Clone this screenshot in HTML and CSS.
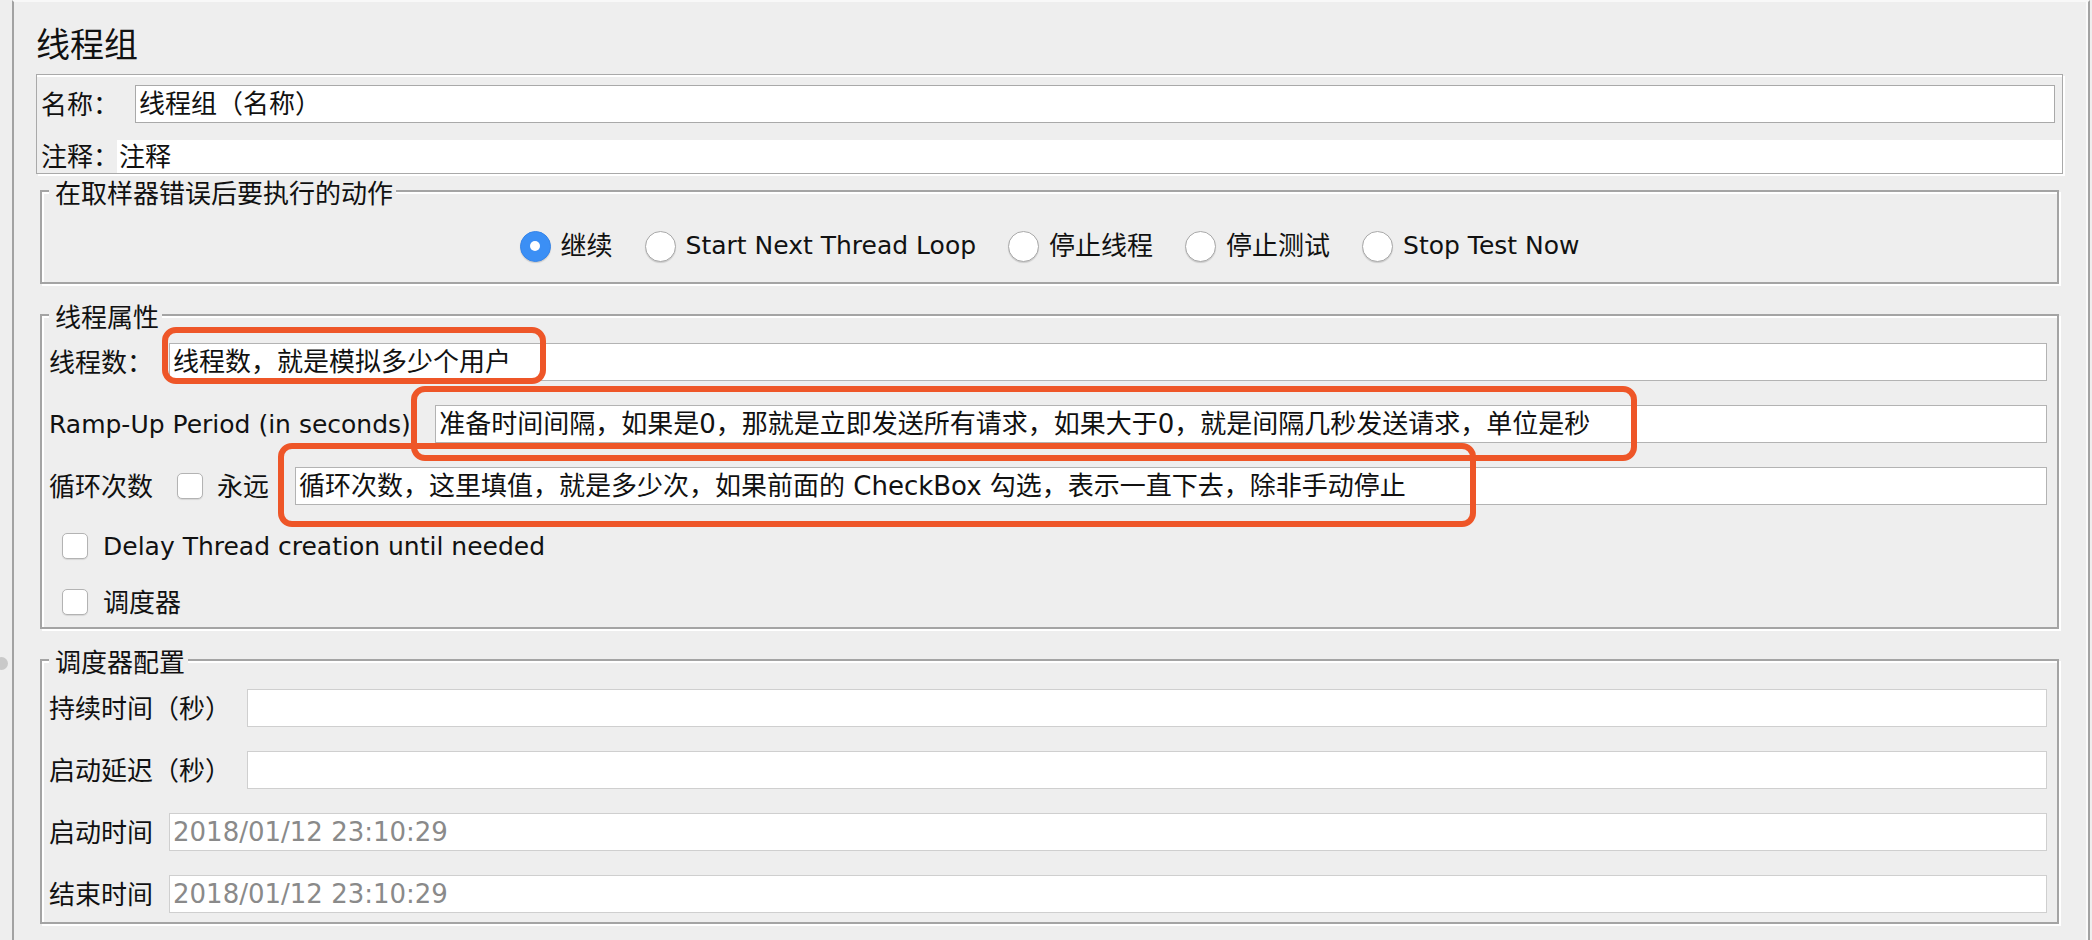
FILE: index.html
```html
<!DOCTYPE html>
<html lang="zh-CN">
<head>
<meta charset="utf-8">
<title>线程组</title>
<link rel="stylesheet" href="styles.css">
</head>
<body>
<div class="frame">
  <h1 class="title">线程组</h1>

  <div class="name-panel">
    <div class="name-row">
      <span class="label">名称：</span>
      <div class="field name-field">线程组（名称）</div>
    </div>
    <div class="comment-row">
      <span class="label comment-label">注释：</span>
      <div class="comment">注释</div>
    </div>
  </div>

  <div class="group group-radio">
    <div class="legend">在取样器错误后要执行的动作</div>
    <div class="radios">
      <div class="radio-item"><span class="radio checked"></span><span>继续</span></div>
      <div class="radio-item"><span class="radio"></span><span class="en">Start Next Thread Loop</span></div>
      <div class="radio-item"><span class="radio"></span><span>停止线程</span></div>
      <div class="radio-item"><span class="radio"></span><span>停止测试</span></div>
      <div class="radio-item"><span class="radio"></span><span class="en">Stop Test Now</span></div>
    </div>
  </div>

  <div class="group group-thread">
    <div class="legend">线程属性</div>
    <div class="row r1">
      <span class="label">线程数：</span>
      <div class="field">线程数，就是模拟多少个用户</div>
    </div>
    <div class="row r2">
      <span class="label en">Ramp-Up Period (in seconds):</span>
      <div class="field">准备时间间隔，如果是0，那就是立即发送所有请求，如果大于0，就是间隔几秒发送请求，单位是秒</div>
    </div>
    <div class="row r3">
      <span class="label loop-label">循环次数</span>
      <span class="checkbox"></span>
      <span class="label forever">永远</span>
      <div class="field">循环次数，这里填值，就是多少次，如果前面的 CheckBox 勾选，表示一直下去，除非手动停止</div>
    </div>
    <div class="row cbrow r4">
      <span class="checkbox"></span>
      <span class="cb-text en">Delay Thread creation until needed</span>
    </div>
    <div class="row cbrow r5">
      <span class="checkbox"></span>
      <span class="cb-text">调度器</span>
    </div>
  </div>

  <div class="group group-sched">
    <div class="legend">调度器配置</div>
    <div class="row s1">
      <span class="label">持续时间（秒）</span>
      <div class="field light"></div>
    </div>
    <div class="row s2">
      <span class="label">启动延迟（秒）</span>
      <div class="field light"></div>
    </div>
    <div class="row s2">
      <span class="label">启动时间</span>
      <div class="field light date">2018/01/12 23:10:29</div>
    </div>
    <div class="row s2">
      <span class="label">结束时间</span>
      <div class="field light date">2018/01/12 23:10:29</div>
    </div>
  </div>
</div>

<div class="splitter-dot"></div>
<div class="mark mark1"></div>
<div class="mark mark2"></div>
<div class="mark mark3"></div>
</body>
</html>
```

FILE: styles.css
```css
* { box-sizing: border-box; }

html, body {
  margin: 0;
  padding: 0;
}

body {
  position: relative;
  width: 2092px;
  height: 940px;
  overflow: hidden;
  background: #eeeeee;
  font-family: "DejaVu Sans", "Noto Sans CJK SC", sans-serif;
  font-size: 26px;
  color: #111111;
}

.en { font-size: 25px; }

.frame {
  margin-left: 12px;
  width: 2078px;
  height: 940px;
  border-left: 2px solid #a2a2a2;
  border-right: 2px solid #a2a2a2;
  border-top: 2px solid #f8f8f8;
  box-shadow: inset -2px 0 0 #fafafa;
}

.title {
  margin: 23px 0 0 22px;
  height: 40px;
  font-size: 34px;
  font-weight: normal;
  line-height: 40px;
}

/* name / comment panel */
.name-panel {
  margin: 9px 25px 0 22px;
  height: 100px;
  padding: 10px 0 0 4px;
  border: 1px solid #a9a9a9;
  box-shadow: inset 0 2px 0 #ffffff, 2px 2px 0 #ffffff;
}

.name-row {
  display: flex;
  align-items: center;
  height: 38px;
  margin-right: 7px;
}

.label {
  flex: none;
  padding-top: 1px;
  line-height: 38px;
  white-space: nowrap;
  margin-right: 16px;
}

.field {
  flex: 1;
  height: 38px;
  padding: 1px 0 0 3px;
  background: #ffffff;
  border: 1px solid #b3b3b3;
  line-height: 35px;
  white-space: nowrap;
  overflow: hidden;
}

.name-field { border-color: #a9a9a9; }

.comment-row {
  display: flex;
  align-items: center;
  height: 33px;
  margin-top: 17px;
}

.comment-label {
  line-height: 33px;
  margin-right: -2px;
}

.comment {
  flex: 1;
  height: 33px;
  padding: 1px 0 0 2px;
  background: #ffffff;
  line-height: 32px;
}

/* titled group boxes */
.group {
  margin: 0 29px 0 26px;
  padding: 0 10px 0 7px;
  border: 2px solid #a4a4a4;
  box-shadow: inset 2px 2px 0 #ffffff, 2px 2px 0 #ffffff;
}

.legend {
  display: table;
  height: 30px;
  margin-top: -13px;
  padding: 0 3px 0 6px;
  background: #eeeeee;
  line-height: 30px;
  white-space: nowrap;
}

.group-radio {
  margin-top: 16px;
  height: 94px;
}

.radios {
  display: flex;
  justify-content: center;
  align-items: center;
  gap: 32px;
  height: 32px;
  margin: 21px -10px 0 -7px;
}

.radio-item {
  display: flex;
  align-items: center;
  gap: 10px;
  line-height: 32px;
  white-space: nowrap;
}

.radio {
  position: relative;
  flex: none;
  width: 31px;
  height: 31px;
  border-radius: 50%;
  background: #ffffff;
  border: 1px solid #a9a9a9;
  box-shadow: 0 1px 1px rgba(0, 0, 0, 0.15);
}

.radio.checked {
  background: #3b8ff5;
  border-color: #3685ea;
}

.radio.checked::after {
  content: "";
  position: absolute;
  left: 50%;
  top: 50%;
  width: 10px;
  height: 10px;
  margin: -5px 0 0 -5px;
  border-radius: 50%;
  background: #ffffff;
}

.group-thread {
  margin-top: 30px;
  height: 315px;
}

.group-sched {
  margin-top: 30px;
  height: 265px;
}

.row {
  display: flex;
  align-items: center;
  height: 38px;
}

.r1 { margin-top: 10px; }
.r2, .r3 { margin-top: 24px; }
.r4 { margin-top: 22px; }
.r5 { margin-top: 18px; }

.s1 { margin-top: 11px; }
.s2 { margin-top: 24px; }

.loop-label { margin-right: 24px; }
.forever { margin-left: 14px; margin-right: 26px; }

.cbrow { padding-left: 13px; }

.checkbox {
  flex: none;
  width: 26px;
  height: 26px;
  background: #ffffff;
  border: 1px solid #b3b3b3;
  border-radius: 5px;
  box-shadow: 0 1px 1px rgba(0, 0, 0, 0.1);
}

.cb-text {
  margin-left: 15px;
  padding-top: 1px;
  line-height: 38px;
  white-space: nowrap;
}

.field.light { border-color: #cfcfcf; }
.field.date { color: #8a8a8a; }

/* splitter handle on the left edge */
.splitter-dot {
  position: absolute;
  left: -5px;
  top: 657px;
  width: 13px;
  height: 13px;
  border-radius: 50%;
  background: #c9c9c9;
}

/* red annotation frames drawn over the form */
.mark {
  position: absolute;
  border: 6px solid #ee5628;
  border-radius: 14px;
}

.mark1 { left: 162px; top: 327px; width: 384px; height: 57px; }
.mark2 { left: 411px; top: 386px; width: 1226px; height: 75px; }
.mark3 { left: 278px; top: 443px; width: 1198px; height: 84px; }
```
